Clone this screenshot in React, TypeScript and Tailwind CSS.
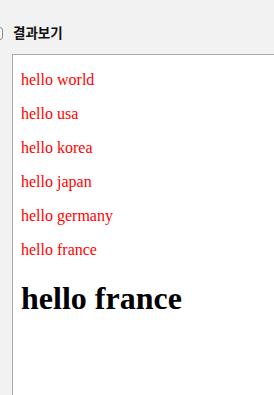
export default function App() {
  const items = ["hello world", "hello usa", "hello korea", "hello japan", "hello germany", "hello france"];

  return (
    <div className="w-[274px] h-[395px] overflow-hidden bg-[#f2f2f2] flex flex-col">
      {/* Tab label */}
      <div className="h-[54px] flex items-center pt-[12px] gap-[10px]">
        <div className="w-[12px] h-[13px] -ml-[9px] rounded-[3px] border border-[#8a8a8a] bg-[#fafafa]" />
        <span className="text-[13.5px] font-bold text-[#111] font-['Noto_Sans_CJK_KR','Noto_Sans',sans-serif] leading-none">
          결과보기
        </span>
      </div>

      {/* Result frame */}
      <div className="ml-[12px] flex-1 bg-white border-l border-t border-[#a9a9a9] px-[8px] font-['Liberation_Serif',serif]">
        {items.map((t) => (
          <p key={t} className="text-[16px] text-[#ff0000] mt-[16px] mb-[16px] leading-[18px]">
            {t}
          </p>
        ))}
        <h1 className="text-[32px] font-bold text-black mt-[21px] leading-[37px]">hello france</h1>
      </div>
    </div>
  );
}
